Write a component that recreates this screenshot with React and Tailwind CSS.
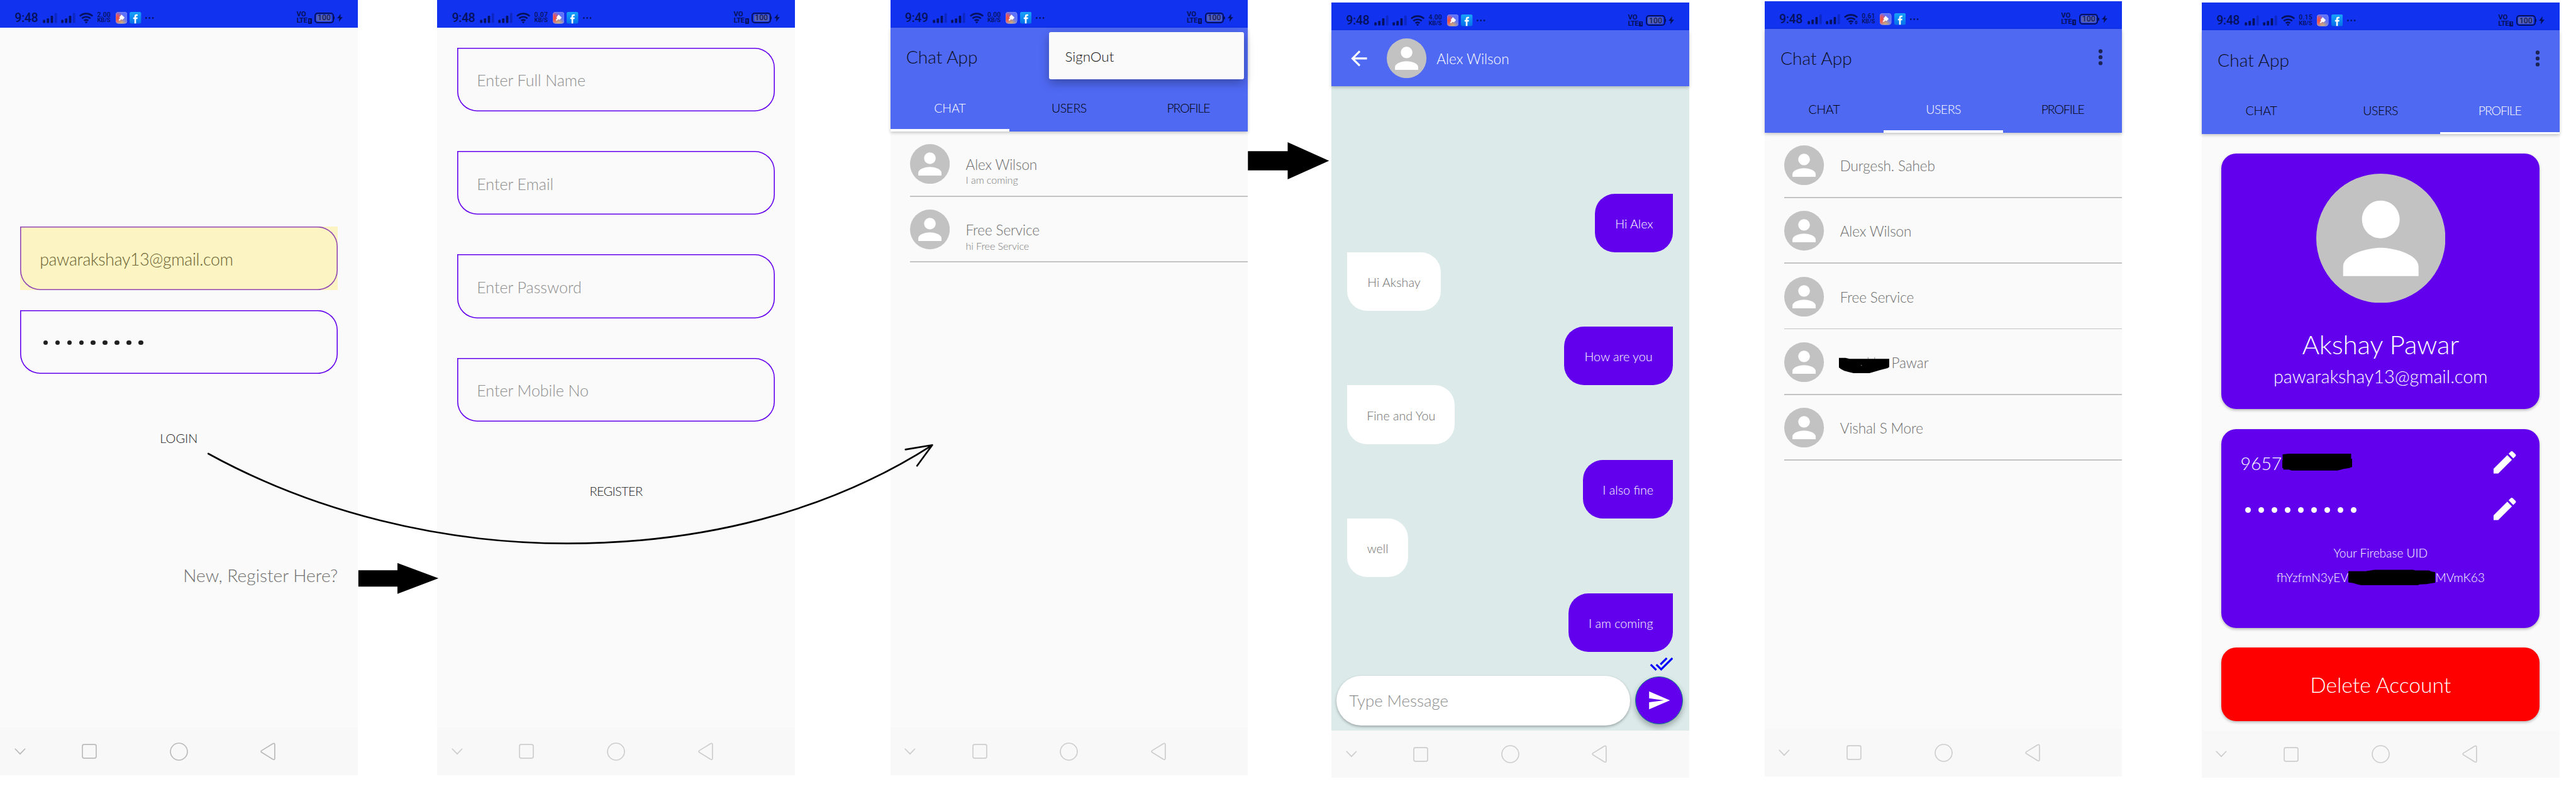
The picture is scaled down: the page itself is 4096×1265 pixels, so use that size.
import React from "react";

/* One spacing unit is one Android dp: every phone is 360 x 780 units. */

function SignalBars() {
  return (
    <svg viewBox="0 0 44 32" className="h-[16.8px] w-[23.2px] shrink-0" fill="#05115a">
      <rect x="0.5" y="22" width="7" height="9.5" rx="2" />
      <rect x="12" y="17.5" width="7" height="14" rx="2" />
      <rect x="24" y="9.5" width="7" height="22" rx="2" />
      <rect x="36" y="1.5" width="7" height="30" rx="2" opacity="0.3" />
    </svg>
  );
}

function Wifi({ active }) {
  return (
    <svg viewBox="0 0 42 33" className="ml-[6.2px] h-[17.4px] w-[22.1px] shrink-0" fill="none" stroke="#05115a" strokeWidth="5">
      <path d="M1.8 10.6C7 5.6 13.6 3 21 3s14 2.6 19.2 7.6" />
      <path d="M8.3 17.6c3.5-3.2 7.8-4.9 12.7-4.9s9.2 1.7 12.7 4.9" />
      <path d="M14.6 24.3c1.8-1.5 4-2.3 6.4-2.3s4.6.8 6.4 2.3" />
      <path d="M17 28.5q4-2.5 8 0L21 33z" fill="#05115a" stroke="none" />
      {active && <path d="M37 20l4.5 5h-9zM37 32l4.5-5h-9z" fill="#05115a" stroke="none" />}
    </svg>
  );
}

function BrushApp() {
  return (
    <svg viewBox="0 0 35 35" className="ml-[7.4px] h-[18.4px] w-[18.4px] shrink-0">
      <defs>
        <radialGradient id="brushRed" cx="0.05" cy="0.55" r="0.6">
          <stop offset="0" stopColor="#f4502f" />
          <stop offset="0.45" stopColor="#e0586a" />
          <stop offset="1" stopColor="#e0586a" stopOpacity="0" />
        </radialGradient>
        <radialGradient id="brushGold" cx="0.5" cy="1" r="0.55">
          <stop offset="0" stopColor="#e2b45c" />
          <stop offset="1" stopColor="#e2b45c" stopOpacity="0" />
        </radialGradient>
      </defs>
      <rect width="35" height="35" rx="8" fill="#5f72fb" />
      <rect width="35" height="35" rx="8" fill="url(#brushRed)" />
      <rect width="35" height="35" rx="8" fill="url(#brushGold)" />
      <rect x="0.5" y="0.5" width="34" height="34" rx="7.5" fill="none" stroke="#9da2e6" />
      <path d="M17.5 8l9.5 9.3-6.5 6.7-4-2-5 4.5-2.5-2 4-5.5-2-3z" fill="#fff" />
    </svg>
  );
}

function FacebookApp() {
  return (
    <svg viewBox="0 0 35 35" className="ml-[4.2px] h-[18.4px] w-[18.4px] shrink-0">
      <defs>
        <linearGradient id="fbBlue" x1="0" y1="0" x2="0" y2="1">
          <stop offset="0" stopColor="#18a3fb" />
          <stop offset="1" stopColor="#0670e8" />
        </linearGradient>
      </defs>
      <rect width="35" height="35" rx="5" fill="url(#fbBlue)" />
      <path d="M14.7 34.5V21.3H11v-4.6h3.7V14c0-4.5 2.3-6.7 6.3-6.7h3.5v4.6h-2.3c-2 0-2.5.8-2.5 2.3v2.5h4.7l-.6 4.6h-4.1v13.2z" fill="#fff" />
    </svg>
  );
}

function StatusBar({ time = "9:48", rate, active }) {
  return (
    <div className="flex h-28 shrink-0 items-center bg-[#1132ef] pt-8 font-['Roboto',sans-serif] text-[#05115a]">
      <span className="ml-[23.6px] w-[44.4px] text-[19.3px] leading-none font-medium tracking-[-0.3px] whitespace-nowrap">{time}</span>
      <SignalBars />
      <div className="w-[5.8px]" />
      <SignalBars />
      <Wifi active={active} />
      <div className="ml-[6.3px] flex w-[21.5px] flex-col text-[10.2px] leading-[8.7px] font-medium whitespace-nowrap">
        <span className="tracking-[0.3px]">{rate}</span>
        <span className="text-[9.3px]">KB/S</span>
      </div>
      <BrushApp />
      <FacebookApp />
      <svg viewBox="0 0 26 6" className="ml-[6.8px] h-[3.2px] w-[13.7px]" fill="#05115a">
        <circle cx="2.5" cy="3" r="2.5" />
        <circle cx="12.8" cy="3" r="2.5" />
        <circle cx="23" cy="3" r="2.5" />
      </svg>
      <div className="ml-auto flex items-center pr-[23.5px]">
        <div className="flex flex-col text-[11.2px] leading-[10px] font-bold">
          <span>VO</span>
          <span className="flex items-end tracking-[-0.4px]">
            LTE
            <span className="mb-[0.5px] ml-[1px] flex h-[8.5px] w-[6px] items-center justify-center rounded-[1px] bg-[#05115a] text-[7.5px] leading-none text-[#1132ef]">1</span>
          </span>
        </div>
        <div className="ml-[4.7px] flex h-[17px] w-[30.5px] items-center justify-center rounded-[5px] border-2 border-[#05115a]">
          <div className="flex h-[11px] w-[24px] items-center justify-center rounded-[2.5px] bg-[#5360b8] text-[12.2px] leading-none font-medium text-[#141a5a]">100</div>
        </div>
        <div className="h-[5px] w-[1.5px] rounded-r-sm bg-[#05115a]" />
        <svg viewBox="0 0 17 24" className="ml-[4px] h-[12.6px] w-[9px]" fill="#05115a">
          <path d="M11 0L0 13.5h6.5L5.5 24 17 10h-7z" />
        </svg>
      </div>
    </div>
  );
}

function NavBar({ tone = "text-[#cdcdcd]" }) {
  return (
    <div className={`mt-auto flex h-48 shrink-0 items-center bg-[#f8f8f8] ${tone}`}>
      <div className="flex w-40 justify-center">
        <svg viewBox="0 0 34 20" className="h-[10.5px] w-[17.9px]" fill="none" stroke="currentColor" strokeWidth="3.2">
          <path d="M1.5 1.5L17 17.5 32.5 1.5" />
        </svg>
      </div>
      <div className="ml-5 flex w-90 justify-center">
        <svg viewBox="0 0 46 46" className="h-[24px] w-[24px]" fill="none" stroke="currentColor" strokeWidth="3.2">
          <rect x="2" y="2" width="42" height="42" rx="5" />
        </svg>
      </div>
      <div className="flex w-90 justify-center">
        <svg viewBox="0 0 56 56" className="h-[29px] w-[29px]" fill="none" stroke="currentColor" strokeWidth="3.2">
          <circle cx="28" cy="28" r="26" />
        </svg>
      </div>
      <div className="flex w-90 justify-center">
        <svg viewBox="0 0 46 54" className="h-[28.4px] w-[24.2px]" fill="none" stroke="currentColor" strokeWidth="3.2" strokeLinejoin="round">
          <path d="M3.5 24.5L38 3.2q5.5-2.2 5.5 2.8v42q0 5-5.5 2.8L3.5 29.5q-3-2.5 0-5z" />
        </svg>
      </div>
    </div>
  );
}

function Avatar({ className }) {
  return (
    <svg viewBox="-1.7 -1.7 27.4 27.4" className={`shrink-0 ${className}`}>
      <circle cx="12" cy="12" r="13.7" fill="#c2c2c2" />
      <path d="M12 12c2.21 0 4-1.79 4-4s-1.79-4-4-4-4 1.79-4 4 1.79 4 4 4zm0 2c-2.67 0-8 1.34-8 4v2h16v-2c0-2.66-5.33-4-8-4z" fill="#fff" />
    </svg>
  );
}

function Phone({ className = "", children }) {
  return (
    <section className={`relative flex h-780 w-360 shrink-0 flex-col bg-[#fafafa] ${className}`}>{children}</section>
  );
}

function Field({ children }) {
  return (
    <div className="flex h-64 items-center rounded-tr-[31.6px] rounded-b-[31.6px] pt-2 pl-20 text-[25px] leading-none text-[#8e8e8e] shadow-[inset_0_0_0_1.6px_#6200ee]">
      {children}
    </div>
  );
}

function Dots({ className, dot }) {
  return (
    <div className={`flex justify-between ${className}`}>
      {Array.from({ length: 9 }, (_, i) => (
        <span key={i} className={`rounded-full ${dot}`} />
      ))}
    </div>
  );
}

function MoreIcon() {
  return (
    <svg viewBox="0 0 24 24" className="mr-10 ml-auto size-24 fill-black/65">
      <circle cx="12" cy="6" r="2" />
      <circle cx="12" cy="12" r="2" />
      <circle cx="12" cy="18" r="2" />
    </svg>
  );
}

const tabs = [
  ["CHAT", "tracking-[-0.1px]"],
  ["USERS", "tracking-[-0.5px]"],
  ["PROFILE", "tracking-[-1.1px]"],
];

function AppHeader({ active, more = true }) {
  return (
    <header className="relative z-10 shrink-0 bg-[#4f69f3] shadow-[0_2px_5px_rgba(0,0,0,0.22)]">
      <div className="flex h-56 items-center pl-16">
        <h1 className="pt-2.5 text-[28.2px] leading-none text-[#0c0f1e]">Chat App</h1>
        {more && <MoreIcon />}
      </div>
      <nav className="grid h-48 grid-cols-3">
        {tabs.map(([label, tracking]) => (
          <div
            key={label}
            className={`flex flex-col items-center justify-end text-[19.5px] leading-none ${tracking} ${label === active ? "text-white" : "text-black"}`}
          >
            <span className="mb-auto pt-18.5">{label}</span>
            <div className={`h-2 w-full ${label === active ? "bg-white" : ""}`} />
          </div>
        ))}
      </nav>
    </header>
  );
}

function Row({ children }) {
  return (
    <li className="ml-20 flex h-66 flex-col">
      <div className="flex h-65 items-start">
        <Avatar className="mt-13 size-40" />
        <div className="ml-16 flex flex-col pt-26.25 text-[22.6px] leading-[23.7px] tracking-[-0.15px] whitespace-nowrap text-[#6f6f6f]">{children}</div>
      </div>
      <div className="h-1 bg-[#c3c3c3]" />
    </li>
  );
}

function LoginPhone() {
  return (
    <Phone>
      <StatusBar rate="2.00" />
      <div className="flex flex-col px-20 pt-200">
        <div className="bg-[#fcf4c3]">
          <div className="flex h-64 items-center rounded-tr-[31.6px] rounded-b-[31.6px] pt-2 pl-20 text-[26.6px] leading-none tracking-[-0.3px] text-[#6b6232] shadow-[inset_0_0_0_1.6px_#9145b4]">
            pawarakshay13@gmail.com
          </div>
        </div>
        <div className="mt-20 flex h-64 items-center rounded-tr-[31.6px] rounded-b-[31.6px] pt-1.5 pl-23.5 shadow-[inset_0_0_0_1.6px_#6200ee]">
          <Dots className="w-[159.3px]" dot="size-[7.7px] bg-[#202020]" />
        </div>
        <div className="mt-40.5 flex h-48 items-center justify-center text-[20px] leading-none text-[#222]">LOGIN</div>
        <div className="mt-102 flex h-24 items-center justify-end text-[28.2px] leading-none text-[#707070]">New, Register Here?</div>
      </div>
      <NavBar tone="text-[#bababa]" />
    </Phone>
  );
}

function RegisterPhone() {
  return (
    <Phone className="ml-80">
      <StatusBar rate="0.07" />
      <div className="flex flex-col gap-40 px-20 pt-20">
        <Field>Enter Full Name</Field>
        <Field>Enter Email</Field>
        <Field>Enter Password</Field>
        <Field>Enter Mobile No</Field>
      </div>
      <div className="mt-46 flex h-48 items-center justify-center text-[20px] leading-none tracking-[-0.7px] text-[#222]">REGISTER</div>
      <NavBar />
    </Phone>
  );
}

function ChatListPhone() {
  return (
    <Phone className="ml-96">
      <StatusBar time="9:49" rate="0.00" />
      <AppHeader active="CHAT" more={false} />
      <div className="absolute top-32 right-4 z-20 flex h-48 w-196 items-center rounded-[3px] bg-[#fafafa] pt-2 pl-16 text-[22.4px] leading-none text-[#151515] shadow-[0_6px_16px_rgba(0,0,0,0.3)]">
        SignOut
      </div>
      <ul>
        <Row>
          <span>Alex Wilson</span>
          <span className="mt-1.75 text-[16.3px] leading-[19px] text-[#7c7c7c]">I am coming</span>
        </Row>
        <Row>
          <span>Free Service</span>
          <span className="mt-1.75 text-[16.3px] leading-[19px] text-[#7c7c7c]">hi Free Service</span>
        </Row>
      </ul>
      <NavBar />
    </Phone>
  );
}

const messages = [
  { text: "Hi Alex", mine: true, width: "w-78.5" },
  { text: "Hi Akshay", width: "w-94" },
  { text: "How are you", mine: true, width: "w-110" },
  { text: "Fine and You", width: "w-108.25" },
  { text: "I also fine", mine: true, width: "w-90.75" },
  { text: "well", width: "w-61.25" },
  { text: "I am coming", mine: true, width: "w-105.25" },
];

function Bubble({ text, mine, width, first }) {
  const base = "flex h-59 items-center justify-center pt-1.75 text-[19.7px] leading-none whitespace-nowrap rounded-b-[31.6px]";
  return mine ? (
    <div className={`${base} ${width} ${first ? "" : "mt-16"} self-end rounded-tl-[31.6px] bg-[#6200ee] text-white`}>{text}</div>
  ) : (
    <div className={`${base} ${width} self-start rounded-tr-[31.6px] bg-white text-[#6f6f6f]`}>{text}</div>
  );
}

function ConversationPhone() {
  return (
    <Phone className="mt-[4.2px] ml-84">
      <StatusBar rate="4.00" />
      <header className="relative z-10 flex h-56 shrink-0 items-center bg-[#4f69f3] pl-16 shadow-[0_2px_5px_rgba(0,0,0,0.22)]">
        <svg viewBox="0 0 24 24" className="size-24" fill="#fff">
          <path d="M20 11H7.83l5.59-5.59L12 4l-8 8 8 8 1.41-1.41L7.83 13H20v-2z" />
        </svg>
        <Avatar className="ml-16 size-40" />
        <span className="pt-2 pl-10 text-[22.6px] leading-none text-white">Alex Wilson</span>
      </header>
      <div className="flex grow flex-col overflow-hidden bg-[#dceaea]">
        <div className="flex flex-col px-16 pt-108">
          {messages.map((m, i) => (
            <Bubble key={m.text} {...m} first={i === 0} />
          ))}
          <svg viewBox="0 0 24 24" className="size-24 self-end" fill="#0000ff">
            <path d="M18 7l-1.41-1.41-6.34 6.34 1.41 1.41L18 7zm4.24-1.41L11.66 16.17 7.48 12l-1.41 1.41L11.66 19l12-12-1.42-1.41zM.41 13.41L6 19l1.41-1.41L1.83 12 .41 13.41z" />
          </svg>
        </div>
        <div className="flex items-center pl-5">
          <div className="flex h-50 w-296 items-center rounded-full bg-white pt-1.5 pl-13 text-[25.8px] leading-none text-[#8e8e8e] shadow-[0_2px_4px_rgba(0,0,0,0.3)]">
            Type Message
          </div>
          <div className="ml-5 flex size-48 items-center justify-center rounded-full border border-[#0e8a80] bg-[#6200ee] shadow-[0_5px_10px_rgba(0,0,0,0.3)]">
            <svg viewBox="0 0 24 24" className="size-24" fill="#fff">
              <path d="M2.01 21L23 12 2.01 3 2 10l15 2-15 2z" />
            </svg>
          </div>
        </div>
      </div>
      <NavBar />
    </Phone>
  );
}

function UsersPhone() {
  return (
    <Phone className="mt-[2px] ml-76">
      <StatusBar rate="0.61" active />
      <AppHeader active="USERS" />
      <ul>
        <Row>Durgesh. Saheb</Row>
        <Row>Alex Wilson</Row>
        <Row>Free Service</Row>
        <Row>
          <span className="flex">
            <svg viewBox="0 -6 153 60" className="-ml-1.25 h-[31.6px] w-[80.6px]">
              <path d="M88 -1v5M108 -1v5" stroke="#8a8a8a" strokeWidth="2" />
              <path d="M0 1h20l12 3h121v24l-6 4-24 6-16 5-15 4H44l-14-3-14-4-10-5-6-5z" fill="#000" />
              <path d="M67 24h2" stroke="#ddd" strokeWidth="2" />
            </svg>
            <span className="ml-2">Pawar</span>
          </span>
        </Row>
        <Row>Vishal S More</Row>
      </ul>
      <NavBar />
    </Phone>
  );
}

function Pencil() {
  return (
    <svg viewBox="0 0 24 24" className="mr-20 ml-auto size-30" fill="#fff">
      <path d="M3 17.25V21h3.75L17.81 9.94l-3.75-3.75L3 17.25zM20.71 7.04c.39-.39.39-1.02 0-1.41l-2.34-2.34c-.39-.39-1.02-.39-1.41 0l-1.83 1.83 3.75 3.75 1.83-1.83z" />
    </svg>
  );
}

function ProfilePhone() {
  const card = "flex flex-col rounded-[23.7px] text-white shadow-[0_2px_4px_rgba(0,0,0,0.28)]";
  return (
    <Phone className="mt-[4.2px] ml-80">
      <StatusBar rate="0.15" />
      <AppHeader active="PROFILE" />
      <div className="flex flex-col gap-20 px-20 pt-20">
        <div className={`${card} h-257 items-center bg-[#6200ee] pt-20`}>
          <Avatar className="size-130" />
          <div className="mt-23.5 flex h-36 items-center text-[42.2px] leading-none tracking-[-0.2px]">Akshay Pawar</div>
          <div className="mt-2.75 flex h-24 items-center text-[28.8px] leading-none">pawarakshay13@gmail.com</div>
        </div>
        <div className={`${card} h-200 bg-[#6200ee] pt-10`}>
          <div className="flex h-47 items-center">
            <div className="relative pt-1.75 pl-19 text-[28.4px] leading-none">
              9657
              <svg viewBox="0 0 211 51" className="absolute top-[2px] left-[97px] h-[26.9px] w-[111px]">
                <path d="M1 2l18-2h189v15h3v25l-8 3-18 3-18 5H28L20 48H3V43H0V20h1z" fill="#000" />
              </svg>
            </div>
            <Pencil />
          </div>
          <div className="flex h-47 items-center">
            <div className="pt-2 pl-23.75">
              <Dots className="w-[177.2px]" dot="size-[8.7px] bg-white" />
            </div>
            <Pencil />
          </div>
          <div className="mt-7.75 flex h-25 items-center justify-center text-[19.1px] leading-none">Your Firebase UID</div>
          <div className="flex h-25 items-center pl-55.25 text-[19.2px] leading-none">
            <span className="w-72.5 overflow-visible whitespace-nowrap">fhYzfmN3yEV</span>
            <svg viewBox="0 0 262 48" className="h-[25.3px] w-[138px] shrink-0">
              <path d="M0 5h52l28-4h115l8 2h40l8 3 11 2v32l-26 4-20 1-8 3H42l-14-3-14-4-14-2z" fill="#000" />
            </svg>
            <span>MVmK63</span>
          </div>
        </div>
        <div className={`${card} h-73.5 items-center justify-center bg-[#ff0000] pt-1.5 text-[33.6px] leading-none`}>Delete Account</div>
      </div>
      <NavBar />
    </Phone>
  );
}

function FlowArrows() {
  return (
    <svg viewBox="0 0 7778 2402" className="pointer-events-none absolute inset-0 z-30 h-full w-full">
      <path d="M1082 1721H1200V1699L1324 1745 1200 1792V1770H1082z" />
      <path d="M3768 456H3888V429L4013 485 3888 541V514H3768z" />
      <path
        d="M629 1369C950 1545 1330 1640 1712 1640C2120 1640 2500 1545 2815 1343M2734 1356.5L2815 1343L2769 1405.7"
        fill="none"
        stroke="#000"
        strokeWidth="5"
        strokeLinecap="round"
        strokeLinejoin="round"
      />
    </svg>
  );
}

export default function App() {
  return (
    <main className="relative flex h-[1265px] w-[4096px] items-start overflow-hidden bg-white font-['Lato',sans-serif] font-light [--spacing:1.57984px]">
      <LoginPhone />
      <RegisterPhone />
      <ChatListPhone />
      <ConversationPhone />
      <UsersPhone />
      <ProfilePhone />
      <FlowArrows />
    </main>
  );
}
